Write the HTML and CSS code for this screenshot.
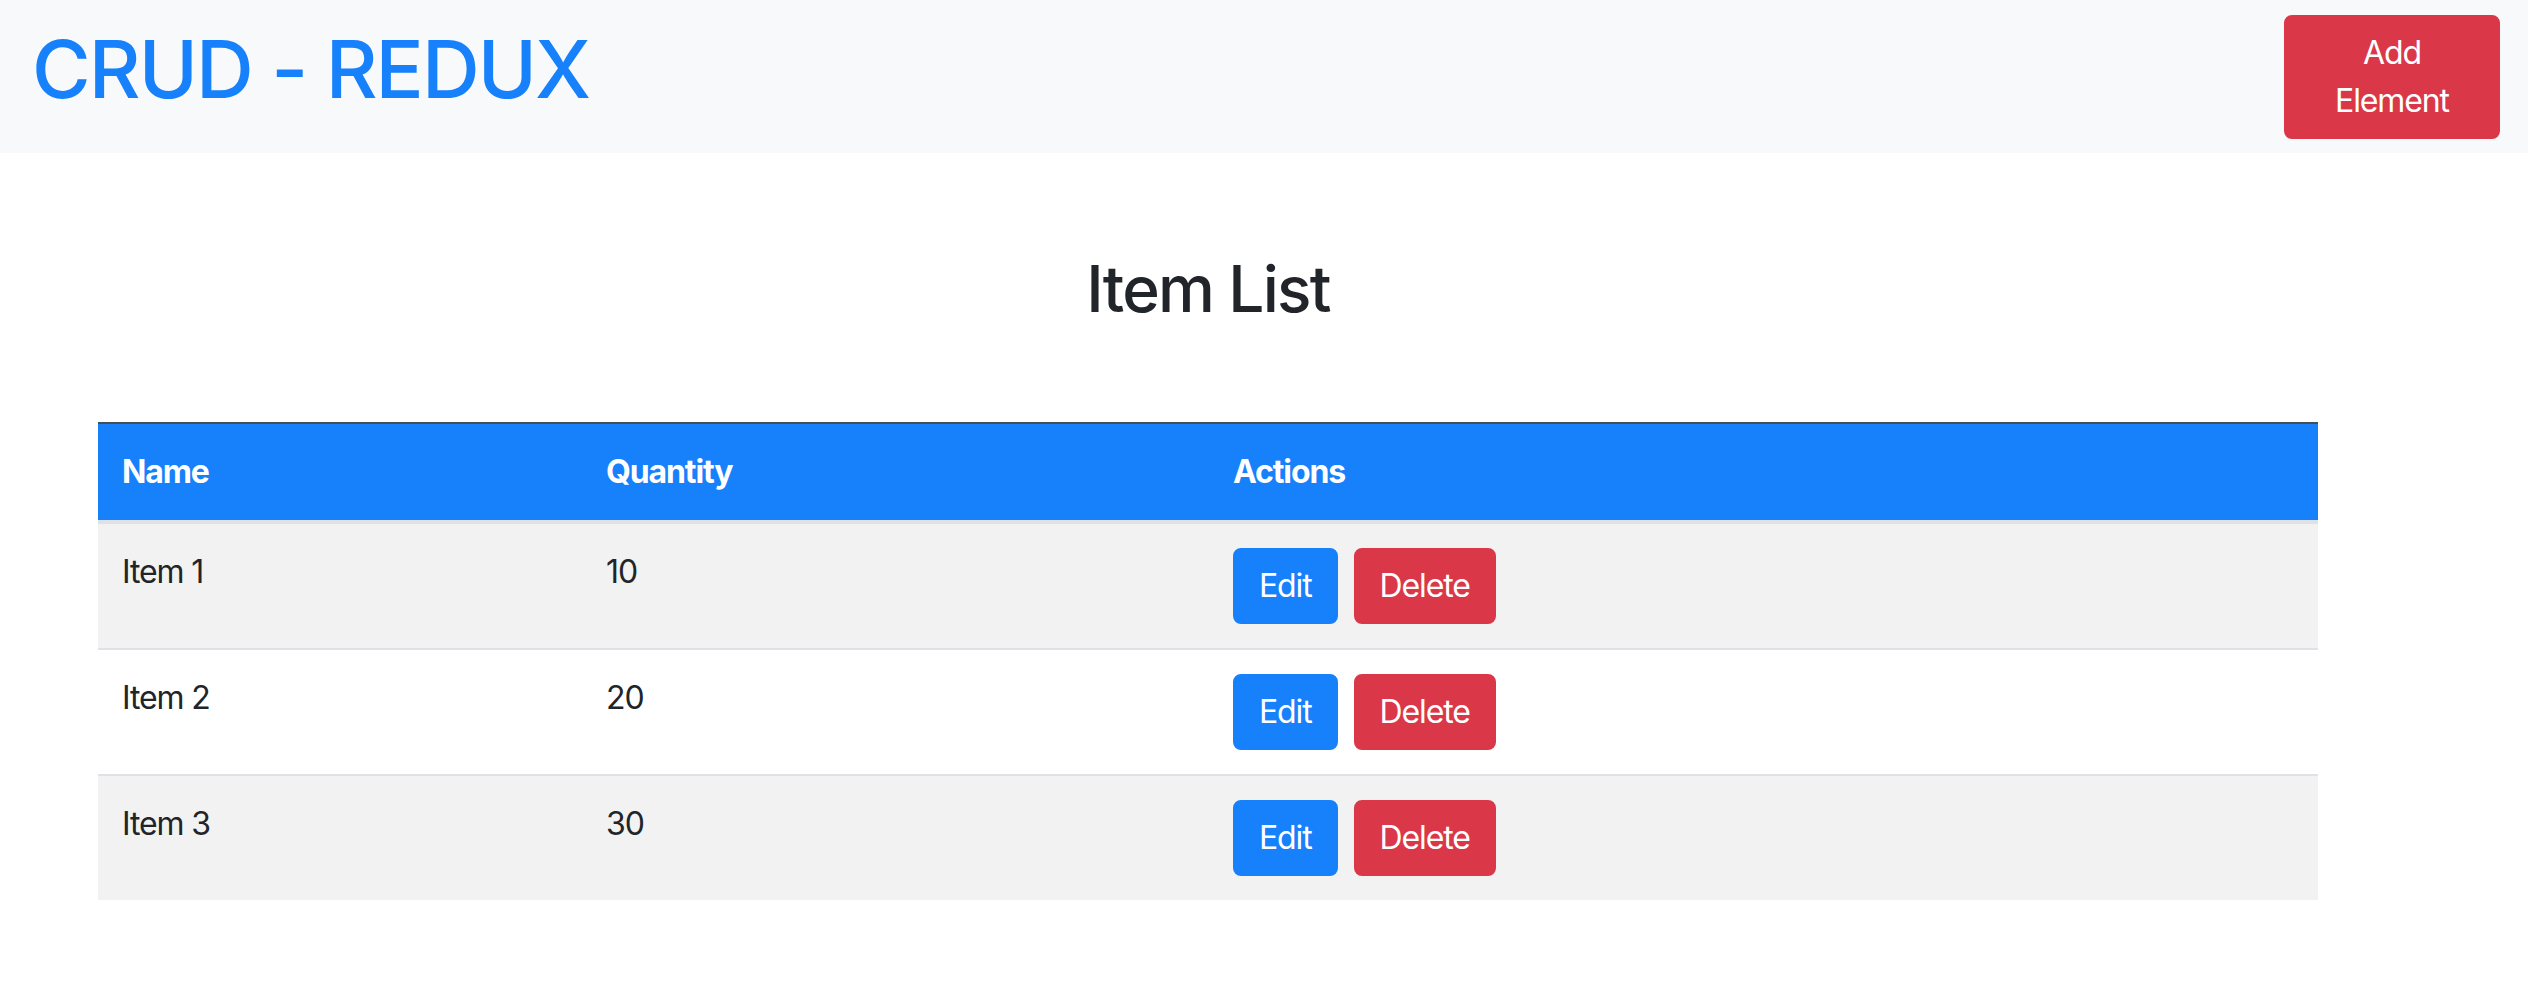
FILE: index.html
```html
<!DOCTYPE html>
<html lang="en">
<head>
<meta charset="utf-8">
<title>CRUD - REDUX</title>
<link rel="stylesheet" href="styles.css">
</head>
<body>
<nav class="navbar">
  <h1 class="brand">CRUD - REDUX</h1>
  <button class="btn btn-danger btn-add">Add Element</button>
</nav>
<main class="container">
  <h2 class="title">Item List</h2>
  <table class="table">
    <thead>
      <tr>
        <th class="col-name">Name</th>
        <th class="col-qty">Quantity</th>
        <th class="col-actions">Actions</th>
      </tr>
    </thead>
    <tbody>
      <tr class="striped">
        <td>Item 1</td>
        <td>10</td>
        <td><button class="btn btn-primary">Edit</button><button class="btn btn-danger">Delete</button></td>
      </tr>
      <tr>
        <td>Item 2</td>
        <td>20</td>
        <td><button class="btn btn-primary">Edit</button><button class="btn btn-danger">Delete</button></td>
      </tr>
      <tr class="striped">
        <td>Item 3</td>
        <td>30</td>
        <td><button class="btn btn-primary">Edit</button><button class="btn btn-danger">Delete</button></td>
      </tr>
    </tbody>
  </table>
</main>
</body>
</html>
```
FILE: styles.css
```css
* { box-sizing: border-box; }
body {
  margin: 0;
  font-family: Inter, "Liberation Sans", sans-serif;
  font-size: 32px;
  line-height: 1.5;
  letter-spacing: -0.035em;
  color: #212529;
  background: #ffffff;
}
.navbar {
  display: flex;
  justify-content: space-between;
  align-items: center;
  height: 153px;
  padding: 14px 28px 14px 32px;
  background: #f8f9fa;
}
.brand {
  margin: 0 0 16px 0;
  font-size: 80px;
  font-weight: 500;
  line-height: 96px;
  letter-spacing: -0.024em;
  color: #1780fb;
}
.btn {
  display: inline-block;
  font-family: inherit;
  font-size: 32px;
  line-height: 48px;
  letter-spacing: inherit;
  padding: 12px 24px;
  border: 2px solid transparent;
  border-radius: 8px;
  color: #ffffff;
  cursor: pointer;
  vertical-align: top;
}
.btn-primary { background: #1780fb; border-color: #1780fb; }
.btn-danger { background: #da3749; border-color: #da3749; }
.btn-add { width: 216px; text-align: center; }
.container {
  padding: 0 98px;
}
.title {
  margin: 97px 0 95px 0;
  width: 2220px;
  text-align: center;
  font-size: 64px;
  font-weight: 500;
  line-height: 77px;
  letter-spacing: -0.028em;
}
.table {
  width: 2220px;
  border-collapse: separate;
  border-spacing: 0;
}
.table th, .table td {
  padding: 24px;
  text-align: left;
  vertical-align: top;
}
.table th {
  background: #1780fb;
  color: #ffffff;
  font-weight: 700;
  border-top: 2px solid #454d55;
  border-bottom: 4px solid #dee2e6;
}
.table td { border-top: 2px solid #dee2e6; }
.table tbody tr:first-child td { border-top: 0; }
.striped td { background: #f2f2f2; }
.col-name { width: 484px; }
.col-qty { width: 627px; }
.col-actions { width: 1109px; }
.table td .btn + .btn { margin-left: 16px; }
```
